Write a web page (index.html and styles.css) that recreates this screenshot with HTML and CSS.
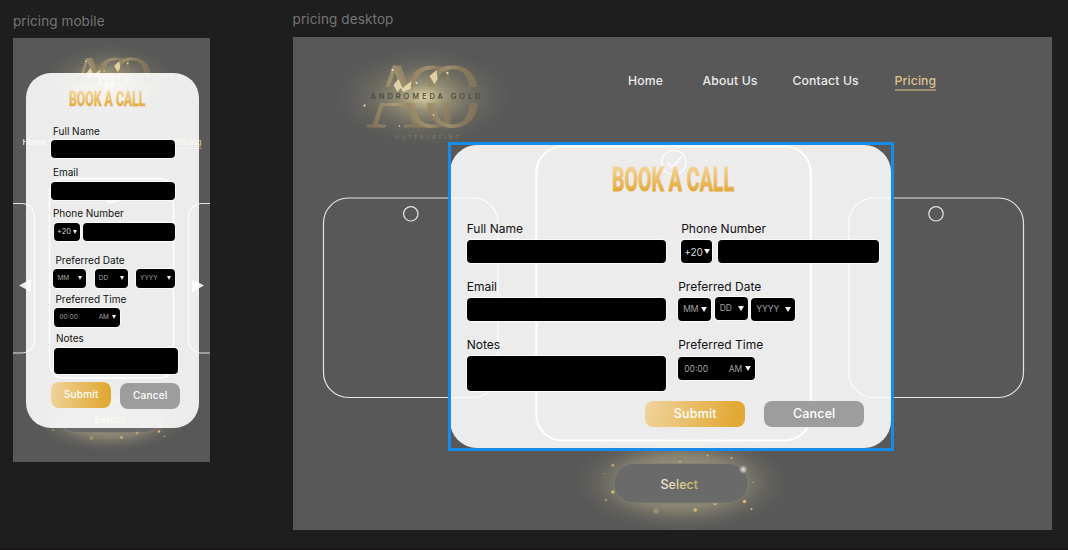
FILE: index.html
```html
<!DOCTYPE html>
<html lang="en">
<head>
<meta charset="utf-8">
<title>Pricing</title>
<link rel="stylesheet" href="styles.css">
</head>
<body>
<svg class="defs" width="0" height="0" aria-hidden="true">
  <defs>
    <radialGradient id="glow"><stop offset="0" stop-color="#eee2b0" stop-opacity=".9"/><stop offset=".25" stop-color="#c5ba8c" stop-opacity=".6"/><stop offset=".6" stop-color="#9c9678" stop-opacity=".28"/><stop offset="1" stop-color="#7a776a" stop-opacity="0"/></radialGradient>
    <radialGradient id="soft"><stop offset="0" stop-color="#c0b790" stop-opacity=".9"/><stop offset=".55" stop-color="#a8a184" stop-opacity=".55"/><stop offset=".8" stop-color="#8f8a74" stop-opacity=".2"/><stop offset="1" stop-color="#7a776a" stop-opacity="0"/></radialGradient>
    <radialGradient id="spark"><stop offset="0" stop-color="#fff"/><stop offset="1" stop-color="#fff" stop-opacity="0"/></radialGradient>
    <linearGradient id="gold" x1="0" x2="1"><stop offset="0" stop-color="#8a7650"/><stop offset=".45" stop-color="#bfa878"/><stop offset=".65" stop-color="#9c8660"/><stop offset="1" stop-color="#8d7a56"/></linearGradient>
    <linearGradient id="title" x1="0" y1="0" x2="0" y2="1"><stop offset=".15" stop-color="#f3d397"/><stop offset=".85" stop-color="#e2a531"/></linearGradient>
    <linearGradient id="select" x1="0" x2="1"><stop offset="0" stop-color="#f5edda"/><stop offset="1" stop-color="#c8b255"/></linearGradient>
    <clipPath id="upper"><path d="M-70-40H70V-9H-70z"/></clipPath>
    <clipPath id="lower"><path d="M-70 7H70V45H-70z"/></clipPath>
    <g id="letters" class="monogram"><text x="-60" y="31" textLength="64" lengthAdjust="spacingAndGlyphs">A</text><text x="-22" y="31" textLength="54" lengthAdjust="spacingAndGlyphs">G</text><text x="-2" y="31" textLength="58" lengthAdjust="spacingAndGlyphs">O</text></g>
    <g id="logo">
      <ellipse cx="-2" cy="1" rx="88" ry="50" fill="url(#glow)"/>
      <use href="#letters" clip-path="url(#upper)"/>
      <use href="#letters" clip-path="url(#lower)"/>
      <path d="M-32-11-27-17-23-8-14-15-15-7-22-4-25-8-28-4zM4-20 11-26 12-17 9-12z" fill="#eedfb0" opacity=".85"/>
      <g fill="#f7ecc8"><circle cx="-61" cy="9.500" r="1"/><circle cx="22" cy="-23" r="1"/><circle cx="-33" cy="-26" r="1"/><circle cx="-9" cy="-13" r=".9"/><circle cx="8" cy="19" r=".8"/><circle cx="-26" cy="30" r=".7"/></g>
      <text class="brand" x="-55" y="2.500" textLength="110">ANDROMEDA GOLD</text>
      <text class="brand-sub" x="-30" y="42.500" textLength="63">OUTSOURCING</text>
    </g>
  </defs>
</svg>

<main class="canvas">
  <section class="artboard mobile">
    <h2 class="frame-name">pricing mobile</h2>
    <div class="frame">
      <svg class="scene" viewBox="13 38 196.500 424" aria-hidden="true">
        <use href="#logo" transform="translate(111 81) scale(.76)"/>
        <g class="side-card"><rect x="-60" y="203.500" width="94.500" height="149.500" rx="13"/><rect x="188.500" y="203.500" width="94" height="149.500" rx="13"/></g>
        <g class="main-card small"><rect x="49.500" y="178.500" width="124" height="199.500" rx="14"/><circle cx="111" cy="196.500" r="6"/></g>
        <path d="M31 279v13L19 285.500zM192 279v13l12-6.500z" fill="#eee"/>
        <ellipse cx="110" cy="419" rx="76" ry="33" fill="url(#soft)"/>
        <rect class="pill" x="60" y="404" width="101" height="28.500" rx="14.200"/>
        <g fill="#d8bb72"><circle cx="159" cy="431.500" r="1.300"/><circle cx="121.500" cy="437.500" r="1.300"/><circle cx="91.500" cy="438" r="2" opacity=".4"/><circle cx="137" cy="433" r="1.500" opacity=".6"/><circle cx="53" cy="430" r=".8"/><circle cx="164.500" cy="436.500" r=".7"/><circle cx="58" cy="425" r="1"/></g>
        <text class="select" x="94" y="422.500" textLength="31" font-size="9.500">Select</text>
      </svg>
      <nav class="nav"><a>Home</a><a class="current">Pricing</a></nav>
      <form class="modal">
        <svg class="title" viewBox="0 0 80 20" role="img"><text x="0" y="17" textLength="76.500" lengthAdjust="spacingAndGlyphs">BOOK A CALL</text></svg>
        <div class="field name"><label>Full Name</label><div class="box"></div></div>
        <div class="field email"><label>Email</label><div class="box"></div></div>
        <div class="field phone"><label>Phone Number</label><div class="row"><div class="box pick code">+20<i></i></div><div class="box grow"></div></div></div>
        <div class="field date"><label>Preferred Date</label><div class="row"><div class="box pick">MM<i></i></div><div class="box pick">DD<i></i></div><div class="box pick year">YYYY<i></i></div></div></div>
        <div class="field time"><label>Preferred Time</label><div class="box pick clock"><span>00:00</span><span>AM</span><i></i></div></div>
        <div class="field notes"><label>Notes</label><div class="box"></div></div>
        <div class="actions"><button type="button" class="submit">Submit</button><button type="button" class="cancel">Cancel</button></div>
      </form>
    </div>
  </section>

  <section class="artboard desktop">
    <h2 class="frame-name">pricing desktop</h2>
    <div class="frame">
      <svg class="scene" viewBox="292.500 37 759.500 493" aria-hidden="true">
        <use href="#logo" transform="translate(425 96)"/>
        <g class="side-card"><rect x="323" y="198" width="174.500" height="199.500" rx="25"/><rect x="848.200" y="198" width="174.800" height="199.500" rx="25"/><circle cx="410.300" cy="213.800" r="7.200"/><circle cx="935.500" cy="213.800" r="7.200"/></g>
        <g class="main-card"><rect x="535.800" y="146.500" width="274.500" height="294" rx="26"/><circle cx="673.300" cy="162.500" r="12.200"/><path d="m667 162.500 4.500 5 9.500-11"/></g>
        <ellipse cx="681" cy="482" rx="108" ry="50" fill="url(#soft)"/>
        <rect class="pill" x="613.200" y="463.500" width="134.500" height="39.500" rx="19.700"/>
        <g fill="#d8bb72"><circle cx="612.300" cy="465.300" r="1.600" opacity=".7"/><circle cx="612.300" cy="492" r="1.700"/><circle cx="605.500" cy="500" r=".9"/><circle cx="603.500" cy="473.500" r=".6"/><circle cx="655.500" cy="511" r="2.600" opacity=".4"/><circle cx="694.700" cy="510" r="1.800"/><path d="M712 503.500h5q-2.500 3-5 0z"/><circle cx="744" cy="501.500" r="1.700"/><circle cx="751" cy="509" r="1.100"/><circle cx="731" cy="458" r="1"/><circle cx="707" cy="455.500" r="1"/><circle cx="679.500" cy="461.500" r=".9"/><circle cx="752.500" cy="482.500" r=".6"/></g>
        <circle cx="742.700" cy="469.500" r="4.500" fill="url(#spark)" opacity=".8"/>
        <text class="select" x="660" y="488.800" textLength="37.500" font-size="12.500">Select</text>
      </svg>
      <nav class="nav"><a class="home">Home</a><a class="about">About Us</a><a class="contact">Contact Us</a><a class="current">Pricing</a></nav>
      <form class="modal">
        <svg class="title" viewBox="0 0 128 32" role="img"><text x="0" y="26" textLength="122" lengthAdjust="spacingAndGlyphs">BOOK A CALL</text></svg>
        <div class="columns">
          <div class="column">
            <div class="field name"><label>Full Name</label><div class="box"></div></div>
            <div class="field email"><label>Email</label><div class="box"></div></div>
            <div class="field notes"><label>Notes</label><div class="box"></div></div>
          </div>
          <div class="column second">
            <div class="field phone"><label>Phone Number</label><div class="row"><div class="box pick code">+20<i></i></div><div class="box grow"></div></div></div>
            <div class="field date"><label>Preferred Date</label><div class="row"><div class="box pick">MM<i></i></div><div class="box pick day">DD<i></i></div><div class="box pick year">YYYY<i></i></div></div></div>
            <div class="field time"><label>Preferred Time</label><div class="box pick clock"><span>00:00</span><span>AM</span><i></i></div></div>
          </div>
        </div>
        <div class="actions"><button type="button" class="submit">Submit</button><button type="button" class="cancel">Cancel</button></div>
      </form>
      <div class="selection"></div>
    </div>
  </section>
</main>
</body>
</html>
```

FILE: styles.css
```css
* { box-sizing: border-box; }
body { margin: 0; background: #1e1e1e; font-family: Inter, "Liberation Sans", sans-serif; }
.defs { position: absolute; }
.canvas { position: relative; width: 1068px; height: 550px; overflow: hidden; border-bottom: 2px solid #1e1519; }

/* artboards on the canvas */
.artboard { position: absolute; }
.mobile { left: 13px; top: 12px; width: 196.500px; }
.desktop { left: 292.500px; top: 10px; width: 759.500px; }
.frame-name { margin: 0 0 8px; height: 18px; font-size: 13.500px; line-height: 18px; font-weight: 400; color: #757575; white-space: nowrap; letter-spacing: .08px; }
.desktop .frame-name { margin-bottom: 9px; letter-spacing: .12px; }
.frame { position: relative; overflow: hidden; background: #585858; }
.mobile .frame { height: 424px; }
.desktop .frame { height: 493px; }
.scene { position: absolute; left: 0; top: 0; width: 100%; height: 100%; }

.monogram { font: 94px "Liberation Serif", serif; fill: url(#gold); opacity: .62; }
.brand { font: 500 7.500px Inter, sans-serif; fill: #4a463a; }
.brand-sub { font: 4.500px Inter, sans-serif; fill: #8b8775; }
.side-card { fill: none; stroke: #e4e4e4; stroke-width: 1.200; }
.main-card { fill: none; stroke: #fffbe2; stroke-width: 2; }
.main-card circle, .main-card path { stroke-width: 1.200; }
.main-card.small { stroke-width: 1.400; }
.pill { fill: #6a6a6a; stroke: #858272; stroke-width: .8; }
.select { fill: url(#select); font-family: Inter, sans-serif; font-weight: 500; }

.nav { position: absolute; display: flex; color: #ececec; font-weight: 500; white-space: nowrap; }
.nav .current { color: #dfc18c; border-bottom: 2px solid #a08f6d; }
.desktop .nav { left: 335.500px; top: 35.500px; font-size: 12.200px; line-height: 16.500px; letter-spacing: .15px; }
.home { width: 74.500px; }
.about { width: 90px; }
.contact { width: 102px; }
.mobile .nav { left: 9.500px; top: 99px; width: 179px; justify-content: space-between; font-size: 8px; line-height: 11px; }
.mobile .nav .current { border-width: 1px; }

/* booking dialog */
.modal { position: absolute; background: rgba(255, 255, 255, .89); color: #111; display: flex; flex-direction: column; }
.desktop .modal { left: 157.500px; top: 108px; width: 441px; height: 303px; border-radius: 27px; padding: 20px 0 0 16.700px; }
.mobile .modal { left: 13.300px; top: 34.700px; width: 172.700px; height: 355px; border-radius: 25px; padding: 16.300px 0 0 24.700px; }
.title { flex: none; }
.title text { font-family: Roboto, sans-serif; font-weight: 700; fill: url(#title); stroke: url(#title); stroke-width: .9; }
.desktop .title { width: 128px; height: 32px; margin-left: 145.300px; font-size: 32.500px; }
.mobile .title { width: 80px; height: 20px; margin-left: 18px; font-size: 19.500px; }
.mobile .title text { stroke-width: .5; }

.field { display: flex; flex-direction: column; }
.field label { white-space: nowrap; }
.row { display: flex; }
.box { background: #000; border-radius: 4px; box-shadow: 0 0 0 1px rgba(255, 255, 255, .75); }
.grow { flex: 1; }
.pick { display: flex; align-items: center; justify-content: space-between; color: #a4a4a4; }
.pick.code { color: #d8d8d8; }
.pick i { border: solid transparent; border-top-color: #f2f2f2; border-bottom: 0; }

.columns { display: flex; margin-top: 24.300px; }
.column { display: flex; flex-direction: column; gap: 15.700px; width: 199px; }
.column.second { margin-left: 12.500px; width: 200.700px; }
.desktop label { font-size: 12px; line-height: 16px; height: 19px; }
.desktop .box { height: 23px; font-size: 9px; }
.desktop .notes .box { height: 35px; }
.desktop .row { gap: 6px; }
.desktop .phone { margin-left: 3px; }
.desktop .pick { width: 33px; padding: 0 4px 0 5px; font-size: 8.500px; }
.desktop .pick i { border-width: 5px 3px 0; }
.desktop .pick.code { width: 31px; padding: 0 2px 0 3px; font-size: 10px; }
.desktop .date .row { gap: 3.500px; }
.desktop .pick.year { width: 43.500px; }
.desktop .day { margin-top: -1px; }
.desktop .pick.clock { width: 77px; padding-left: 6px; margin-top: 1.500px; }
.clock span:nth-child(2) { margin-left: auto; margin-right: 3px; }

.actions { display: flex; }
.actions button { border: 0; padding: 0; color: #fff; font-family: Inter, sans-serif; font-weight: 500; }
.submit { background: linear-gradient(100deg, #efd49d, #e2a834 90%); }
.cancel { background: #9d9d9d; }
.desktop .actions { margin: 10.500px 0 0 178.300px; gap: 18.500px; }
.desktop .actions button { width: 100.500px; height: 25.500px; border-radius: 8px; font-size: 12.500px; letter-spacing: .15px; }

.mobile label { font-size: 10px; line-height: 13px; margin-left: 2px; }
.mobile .box { height: 18.500px; font-size: 6.500px; }
.mobile .field { width: 124px; }
.mobile .name { margin-top: 16.200px; }
.mobile .name label { height: 14.500px; }
.mobile .email { margin-top: 8px; }
.mobile .email label { height: 15.500px; }
.mobile .phone { margin-top: 7px; }
.mobile .phone label { height: 15.500px; }
.mobile .phone .row { gap: 3.500px; margin-left: 3px; }
.mobile .date { margin-top: 12.500px; }
.mobile .date label, .mobile .time label { margin-left: 4.500px; height: 15.500px; }
.mobile .date .row { justify-content: space-between; margin-left: 2.500px; }
.mobile .pick { width: 33px; padding: 0 4px; }
.mobile .pick i { border-width: 4px 2.500px 0; }
.mobile .pick.code { width: 26px; padding: 0 3px; font-size: 7.500px; }
.mobile .pick.year { width: 39px; }
.mobile .time { margin-top: 5px; }
.mobile .time .pick { width: 65.500px; margin-left: 3.500px; padding-left: 5px; }
.mobile .notes { margin-top: 5px; margin-left: 3px; }
.mobile .notes label { height: 16px; }
.mobile .notes .box { height: 26.500px; }
.mobile .actions { margin-top: 8px; gap: 8.500px; }
.mobile .actions button { width: 60.500px; height: 25.500px; border-radius: 8px; font-size: 10px; letter-spacing: .2px; padding-bottom: 1px; }
.mobile .cancel { margin-top: 1px; }

.selection { position: absolute; left: 155px; top: 105px; width: 446px; height: 309px; border: 3px solid #168be8; pointer-events: none; }
```
